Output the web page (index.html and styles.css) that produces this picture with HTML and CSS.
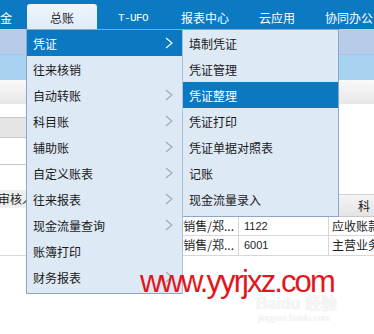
FILE: index.html
```html
<!DOCTYPE html>
<html lang="zh-CN">
<head>
<meta charset="utf-8">
<title>总账菜单</title>
<link rel="stylesheet" href="styles.css">
</head>
<body>
<div class="app">
  <nav class="topnav">
    <span class="nav-item first">资金</span>
    <span class="nav-tab">总账</span>
    <span class="nav-item mono">T-UFO</span>
    <span class="nav-item">报表中心</span>
    <span class="nav-item">云应用</span>
    <span class="nav-item">协同办公</span>
  </nav>
  <div class="bar bar1"></div>
  <div class="bar bar2"></div>
  <div class="bar bar3"></div>
  <div class="workspace">
    <div class="leftpanel">
      <div class="lp-row r1"></div>
      <div class="lp-row r2"></div>
      <div class="lp-row r3"></div>
      <div class="lp-row r4"></div>
      <div class="lp-head">审核人</div>
      <div class="lp-rest"></div>
    </div>
    <div class="rightpanel">
      <div class="rp-space"></div>
      <div class="grid-head">
        <div class="c1"></div>
        <div class="c2"></div>
        <div class="c3">科目名称</div>
      </div>
      <div class="grid-row">
        <div class="c1"><span>张/销售/郑...</span></div>
        <div class="c2">1122</div>
        <div class="c3">应收账款</div>
      </div>
      <div class="grid-row">
        <div class="c1"><span>张/销售/郑...</span></div>
        <div class="c2">6001</div>
        <div class="c3">主营业务收入</div>
      </div>
    </div>
  </div>

  <ul class="menu menu-main">
    <li class="item active"><span>凭证</span><svg class="chev" viewBox="0 0 8 12"><polyline points="1,1 7,6 1,11"/></svg></li>
    <li class="item"><span>往来核销</span></li>
    <li class="item"><span>自动转账</span><svg class="chev" viewBox="0 0 8 12"><polyline points="1,1 7,6 1,11"/></svg></li>
    <li class="item"><span>科目账</span><svg class="chev" viewBox="0 0 8 12"><polyline points="1,1 7,6 1,11"/></svg></li>
    <li class="item"><span>辅助账</span><svg class="chev" viewBox="0 0 8 12"><polyline points="1,1 7,6 1,11"/></svg></li>
    <li class="item"><span>自定义账表</span><svg class="chev" viewBox="0 0 8 12"><polyline points="1,1 7,6 1,11"/></svg></li>
    <li class="item"><span>往来报表</span><svg class="chev" viewBox="0 0 8 12"><polyline points="1,1 7,6 1,11"/></svg></li>
    <li class="item"><span>现金流量查询</span><svg class="chev" viewBox="0 0 8 12"><polyline points="1,1 7,6 1,11"/></svg></li>
    <li class="item"><span>账簿打印</span></li>
    <li class="item"><span>财务报表</span><svg class="chev" viewBox="0 0 8 12"><polyline points="1,1 7,6 1,11"/></svg></li>
  </ul>

  <ul class="menu menu-sub">
    <li class="item"><span>填制凭证</span></li>
    <li class="item"><span>凭证管理</span></li>
    <li class="item active"><span>凭证整理</span></li>
    <li class="item"><span>凭证打印</span></li>
    <li class="item"><span>凭证单据对照表</span></li>
    <li class="item"><span>记账</span></li>
    <li class="item"><span>现金流量录入</span></li>
  </ul>

  <div class="watermark">www.yyrjxz.com</div>
  <div class="baidu">
    <div class="baidu-logo">Baidu 经验</div>
    <div class="baidu-url">jingyan.baidu.com</div>
  </div>
</div>
</body>
</html>
```
FILE: styles.css
```css
* { box-sizing: border-box; }
html, body { margin: 0; padding: 0; background: #fff; }
body { font-family: "Noto Sans CJK SC", "Liberation Sans", sans-serif; }

.app {
  position: relative;
  width: 374px;
  height: 334px;
  overflow: hidden;
  background: #fff;
}

/* top navigation */
.topnav {
  display: flex;
  height: 29px;
  background: #0b7ac2;
  color: #fff;
  font-size: 12px;
}
.nav-item {
  width: 72px;
  flex: none;
  text-align: center;
  padding-top: 7px;
  line-height: 22px;
  white-space: nowrap;
}
.nav-item.first {
  width: 39px;
  margin-left: -12px;
  padding-right: 15px;
  text-align: left;
}
.nav-item.mono {
  font-family: "Liberation Mono", monospace;
  font-size: 11px;
  letter-spacing: -0.6px;
}
.nav-tab {
  flex: none;
  width: 70px;
  margin-top: 4px;
  height: 25px;
  padding-top: 3px;
  line-height: 22px;
  text-align: center;
  color: #2a2a2a;
  background: linear-gradient(#eef5fc, #dfecf8);
  border-radius: 3px 3px 0 0;
}

/* toolbar bands */
.bar1 { height: 26px; background: #b6cce8; border-bottom: 1px solid #a9c3e2; }
.bar2 { height: 25px; background: #a7d3f1; }
.bar3 { height: 24px; background: linear-gradient(#f9f9f9, #e7e7e7); }

/* work area */
.workspace {
  display: grid;
  grid-template-columns: 183px 1fr;
}
.lp-row { border-bottom: 1px solid #c9c9c9; }
.lp-row.r1 { height: 14px; }
.lp-row.r2 { height: 20px; background: #e5e5e5; }
.lp-row.r3 { height: 27px; }
.lp-row.r4 { height: 25px; border-bottom: none; }
.lp-head {
  height: 18px;
  background: #efefef;
  font-size: 12px;
  line-height: 18px;
  color: #222;
  margin-left: -2px;
}
.lp-rest { height: 48px; border-bottom: 1px solid #d6d6d6; }

.rp-space { height: 91px; border-bottom: 1px solid #d2d2d2; }
.grid-head, .grid-row {
  display: grid;
  grid-template-columns: 56px 90px 1fr;
  font-size: 12px;
  color: #1e1e1e;
}
.grid-head {
  height: 22px;
  background: linear-gradient(#f4f4f4, #e4e4e4);
  border-bottom: 1px solid #c8c8c8;
}
.grid-head .c3 {
  padding-left: 29px;
  line-height: 22px;
  letter-spacing: 4px;
  white-space: nowrap;
}
.grid-row { border-bottom: 1px solid #d6d6d6; height: 19px; line-height: 18px; }
.grid-row + .grid-row { height: 20px; }
.grid-row .c1 {
  display: flex;
  justify-content: flex-end;
  padding-right: 4px;
  border-right: 1px solid #d6d6d6;
  white-space: nowrap;
}
.grid-row .c2 {
  padding-left: 5px;
  border-right: 1px solid #d6d6d6;
  font-family: "Liberation Sans", sans-serif;
  font-size: 11px;
}
.grid-row .c3 { padding-left: 3px; white-space: nowrap; }

/* dropdown menus */
.menu {
  position: absolute;
  top: 29px;
  margin: 0;
  list-style: none;
  background: #dde9f5;
  border: 1px solid #8ba7c5;
  font-size: 12px;
  color: #1a1a1a;
}
.menu-main {
  left: 26px;
  width: 157px;
  padding: 0 0 3px;
  border-right-color: #a9c2dc;
}
.menu-sub {
  left: 183px;
  width: 156px;
  padding: 0 0 4px;
  border-left: none;
}
.item {
  height: 26px;
  display: flex;
  align-items: center;
  justify-content: space-between;
  padding: 0 9px 0 6px;
  white-space: nowrap;
}
.item.active { background: #0a79c1; color: #fff; }
.chev { width: 8px; height: 12px; }
.chev polyline { fill: none; stroke: #a3a9b0; stroke-width: 1.1; }
.item.active .chev polyline { stroke: #fff; }

/* watermarks overlaying the screenshot */
.watermark {
  position: absolute;
  left: 140px;
  top: 266px;
  font-family: "Liberation Sans", sans-serif;
  font-size: 31px;
  line-height: 31px;
  letter-spacing: -1.9px;
  color: #e3161d;
  white-space: nowrap;
}
.baidu {
  position: absolute;
  left: 256px;
  top: 295px;
  color: #f6f6f6;
  text-shadow: 0 0 1px #e2e2e2;
  font-family: "Liberation Sans", sans-serif;
  white-space: nowrap;
}
.baidu-logo { font-size: 16px; line-height: 17px; font-weight: bold; }
.baidu-url { font-size: 9px; line-height: 11px; padding-left: 2px; margin-top: 1px; }
```
